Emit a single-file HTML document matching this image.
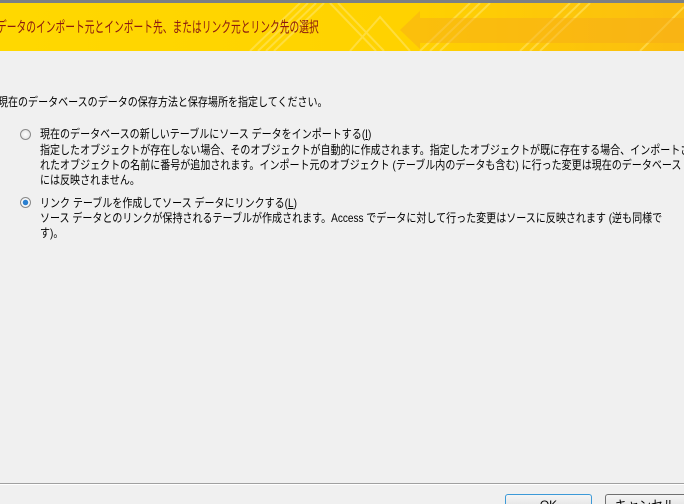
<!DOCTYPE html><html><head><meta charset="utf-8"><style>
html,body{margin:0;width:684px;height:504px;overflow:hidden}
body{background:#f0f0f0;position:relative;font-family:"Liberation Sans","Noto Sans CJK JP",sans-serif;font-size:12px;color:#000}
.hdr{position:absolute;left:0;top:0;width:684px;height:51px;background:linear-gradient(90deg,#ffd800 0%,#ffd200 60%,#fbbd10 100%);border-top:3px solid #7a7f85;box-sizing:border-box;overflow:hidden}
.hdr .t{position:absolute;left:-3px;top:13px;font-size:15px;color:#8b1a10;white-space:nowrap;transform:scaleX(0.65);transform-origin:0 0}
.a{position:absolute;white-space:nowrap;line-height:16px;transform:scaleX(0.835);transform-origin:0 0}
.r{position:absolute;width:11px;height:11px;border-radius:50%;border:1px solid #8a8a8a;background:radial-gradient(#fff,#ddd);box-sizing:border-box}
.btn{position:absolute;top:494px;height:10px;border:1px solid #707070;border-bottom:none;border-radius:3px 3px 0 0;background:linear-gradient(#f5f5f5,#e8e8e8);text-align:center;line-height:20px;box-sizing:border-box;overflow:hidden}
</style></head><body>
<div class="hdr">
<svg width="684" height="48" style="position:absolute;left:0;top:0">
<g stroke="#ffe566" stroke-width="2" fill="none" opacity=".6">
<path d="M250 48 L300 0 M258 48 L308 0 M266 48 L316 0 M274 48 L324 0"/>
<path d="M330 0 L376 48 M338 0 L384 48 M350 48 L380 14 L410 48"/>
<path d="M420 48 L470 0 M430 48 L480 0 M440 48 L490 0"/>
<path d="M520 48 L570 0 M530 48 L580 0 M540 48 L590 0 M640 48 L684 4"/>
</g>
<path d="M400 27 L420 8 L420 15 L684 15 L684 40 L420 40 L420 46 Z" fill="#f6a81a" opacity=".45"/>
</svg>
<div class="t">データのインポート元とインポート先、またはリンク元とリンク先の選択</div></div>
<div class="a" style="left:-2px;top:94px">現在のデータベースのデータの保存方法と保存場所を指定してください。</div>
<div class="r" style="left:20px;top:129px"></div>
<div class="a" style="left:40px;top:126px">現在のデータベースの新しいテーブルにソース データをインポートする(<u>I</u>)</div>
<div class="a" style="left:40px;top:143px;line-height:15px">指定したオブジェクトが存在しない場合、そのオブジェクトが自動的に作成されます。指定したオブジェクトが既に存在する場合、インポートさ<br>れたオブジェクトの名前に番号が追加されます。インポート元のオブジェクト (テーブル内のデータも含む) に行った変更は現在のデータベース<br>には反映されません。</div>
<div class="r" style="left:20px;top:197px;background:radial-gradient(#2a7fd0 0 2.5px,#fff 3px,#ddd)"></div>
<div class="a" style="left:40px;top:195px">リンク テーブルを作成してソース データにリンクする(<u>L</u>)</div>
<div class="a" style="left:40px;top:211px;line-height:15px">ソース データとのリンクが保持されるテーブルが作成されます。Access でデータに対して行った変更はソースに反映されます (逆も同様で<br>す)。</div>
<div style="position:absolute;left:0;top:483px;width:684px;height:1px;background:#a0a0a0"></div>
<div style="position:absolute;left:0;top:484px;width:684px;height:1px;background:#fff"></div>
<div class="btn" style="left:505px;width:87px;border-color:#3c9ad8">OK</div>
<div class="btn" style="left:605px;width:79px;border-right:none;border-radius:3px 0 0 0">キャンセル</div>
</body></html>
